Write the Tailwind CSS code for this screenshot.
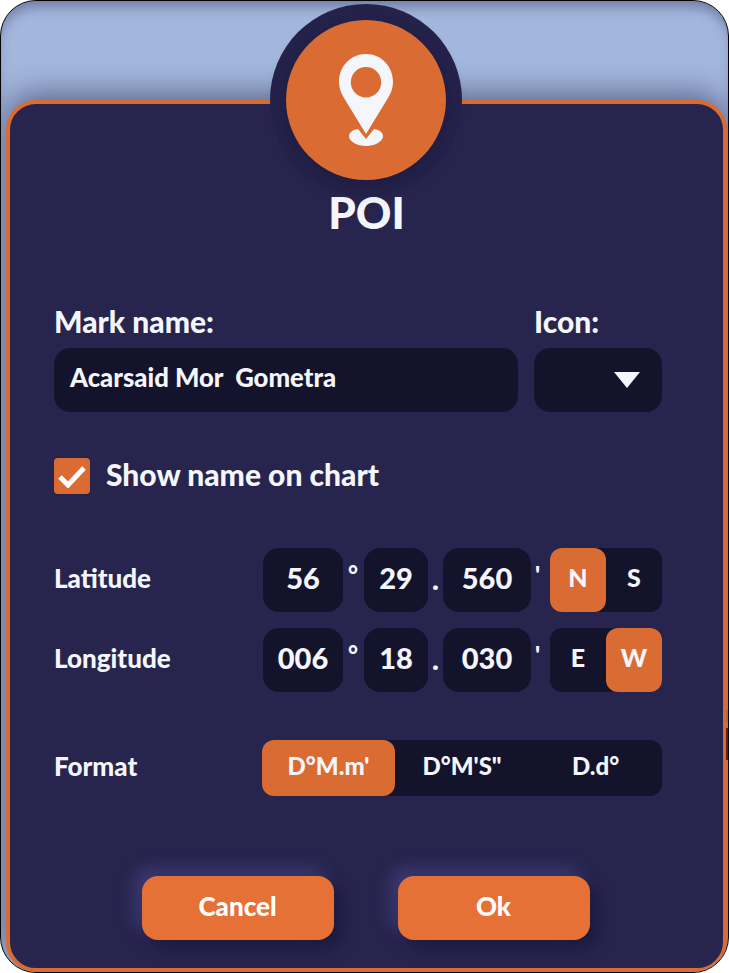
<!DOCTYPE html>
<html>

<head>
    <meta charset="UTF-8">
    <title>POI</title>
    <script src="https://cdn.jsdelivr.net/npm/@tailwindcss/browser@4"></script>
</head>

<body class="bg-white">
    <!-- Window -->
    <div class="relative w-[729px] h-[973px] overflow-hidden rounded-[36px] border border-black bg-[#a3b6dd] font-['Lato',sans-serif] text-[#f4f6fb] shadow-[inset_0_10px_12px_-4px_rgba(60,70,110,0.5)]">

        <!-- Panel -->
        <div class="mt-[99px] ml-[5px] w-[721px] h-[872px] rounded-[30px] border-4 border-[#da6c33] bg-[#27254d] shadow-[0_-6px_30px_rgba(40,45,80,0.6)] pt-[78px] px-[44px]">
            <h1 class="text-center text-[44px] leading-[60px] font-black">POI</h1>

            <!-- Name and icon -->
            <div class="flex gap-4 mt-[59px]">
                <div class="w-[464px]">
                    <label class="block text-[30px] leading-[40px] font-black mb-[7px]">Mark name:</label>
                    <div class="h-16 rounded-2xl bg-[#14132c] flex items-center px-4 pb-[5px] text-[25.700px] font-black whitespace-pre">Acarsaid Mor  Gometra</div>
                </div>
                <div class="w-32">
                    <label class="block text-[30px] leading-[40px] font-black mb-[7px]">Icon:</label>
                    <div class="h-16 rounded-2xl bg-[#14132c] flex items-center justify-end pr-[22px]">
                        <svg width="26" height="18" viewBox="0 0 26 18"><path d="M0 1h26L13 17z" fill="#f4f6fb" /></svg>
                    </div>
                </div>
            </div>

            <!-- Show name -->
            <div class="flex items-center gap-4 mt-[46px] h-9">
                <div class="w-9 h-9 rounded bg-[#da6c33] flex items-center justify-center">
                    <svg width="30" height="24" viewBox="0 0 30 24"><path d="M3 13l8 8L27 4" fill="none" stroke="#fff" stroke-width="5" /></svg>
                </div>
                <span class="text-[30px] font-black mb-[4px]">Show name on chart</span>
            </div>

            <!-- Latitude -->
            <div class="flex items-center mt-[54px] font-black h-16">
                <span class="w-[209px] text-[26px] mb-[4px]">Latitude</span>
                <div class="w-20 h-16 rounded-2xl bg-[#14132c] flex items-center justify-center pb-[4px] text-[29px]">56</div>
                <span class="w-[21px] self-start mt-[9px] pl-[5px] text-[24px]">°</span>
                <div class="w-16 h-16 rounded-2xl bg-[#14132c] flex items-center justify-center pb-[4px] text-[29px]">29</div>
                <span class="w-[15px] text-center text-[29px] mb-[2px]">.</span>
                <div class="w-[88px] h-16 rounded-2xl bg-[#14132c] flex items-center justify-center pb-[4px] text-[29px]">560</div>
                <span class="w-[19px] self-start mt-[9px] pl-[4px] text-[24px]">'</span>
                <div class="w-28 h-16 rounded-xl bg-[#14132c] flex text-[25px]">
                    <div class="w-14 pb-[4px] rounded-xl bg-[#da6c33] flex items-center justify-center">N</div>
                    <div class="w-14 pb-[4px] flex items-center justify-center">S</div>
                </div>
            </div>

            <!-- Longitude -->
            <div class="flex items-center mt-4 font-black h-16">
                <span class="w-[209px] text-[26px] mb-[4px]">Longitude</span>
                <div class="w-20 h-16 rounded-2xl bg-[#14132c] flex items-center justify-center pb-[4px] text-[29px]">006</div>
                <span class="w-[21px] self-start mt-[9px] pl-[5px] text-[24px]">°</span>
                <div class="w-16 h-16 rounded-2xl bg-[#14132c] flex items-center justify-center pb-[4px] text-[29px]">18</div>
                <span class="w-[15px] text-center text-[29px] mb-[2px]">.</span>
                <div class="w-[88px] h-16 rounded-2xl bg-[#14132c] flex items-center justify-center pb-[4px] text-[29px]">030</div>
                <span class="w-[19px] self-start mt-[9px] pl-[4px] text-[24px]">'</span>
                <div class="w-28 h-16 rounded-xl bg-[#14132c] flex text-[25px]">
                    <div class="w-14 pb-[4px] flex items-center justify-center">E</div>
                    <div class="w-14 pb-[4px] rounded-xl bg-[#da6c33] flex items-center justify-center">W</div>
                </div>
            </div>

            <!-- Format -->
            <div class="flex items-center mt-[48px] font-black h-14">
                <span class="w-[208px] text-[26px] mb-[4px]">Format</span>
                <div class="w-[400px] h-14 rounded-xl bg-[#14132c] flex text-[24px]">
                    <div class="w-[133px] pb-[4px] rounded-xl bg-[#da6c33] flex items-center justify-center">D°M.m'</div>
                    <div class="w-[134px] pb-[4px] flex items-center justify-center">D°M'S"</div>
                    <div class="w-[133px] pb-[4px] flex items-center justify-center">D.d°</div>
                </div>
            </div>

            <!-- Buttons -->
            <div class="flex justify-center gap-16 mt-[80px] mr-[2px] text-[26px] font-black text-white">
                <button class="w-48 h-16 pb-[4px] rounded-2xl bg-[#e57137] shadow-[8px_8px_16px_rgba(24,22,55,0.7),-8px_-8px_16px_rgba(66,62,125,0.8)]">Cancel</button>
                <button class="w-48 h-16 pb-[4px] rounded-2xl bg-[#e57137] shadow-[8px_8px_16px_rgba(24,22,55,0.7),-8px_-8px_16px_rgba(66,62,125,0.8)]">Ok</button>
            </div>
        </div>

        <!-- Sliver of what sits behind the window -->
        <div class="absolute left-[725px] top-[709px] w-[2px] h-[12px] bg-[#b5682f]"></div>
        <div class="absolute left-[725px] top-[727px] w-[2px] h-[32px] bg-[#6b1a1f]"></div>

        <!-- Badge over the panel edge -->
        <div class="absolute left-[269px] top-[3px] w-48 h-48 rounded-full bg-[#25234b] flex items-center justify-center">
            <div class="w-40 h-40 rounded-full bg-[#da6c33] flex items-center justify-center shadow-[0_6px_20px_rgba(20,18,50,0.45)]">
                <svg width="56" height="94" viewBox="0 0 56 94">
                    <path fill-rule="evenodd" fill="#f4f6fb" d="M28 1C12.500 1 1 13.500 1 29C1 35 3 40 6 45L28 81L50 45C53 40 55 35 55 29C55 13.500 43.500 1 28 1ZM28 14A15.200 15.200 0 1 1 28 44.400A15.200 15.200 0 1 1 28 14Z" />
                    <path fill="#f4f6fb" d="M20 76C14 77 11 80 11 83C11 89 20 93 28 93C36 93 45 89 45 83C45 80 42 77 36 76L28 86Z" />
                </svg>
            </div>
        </div>
    </div>
</body>

</html>
